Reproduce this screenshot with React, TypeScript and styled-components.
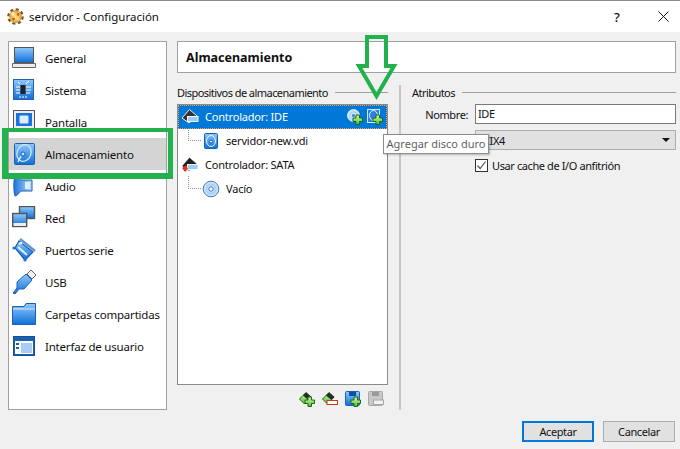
import React from "react";
import styled, { createGlobalStyle } from "styled-components";

const Global = createGlobalStyle`
  html, body { margin: 0; padding: 0; background: #f0f0f0; }
  body { font-family: "Noto Sans", "Open Sans", sans-serif; font-size: 11.5px; color: #101010; }
`;

const Window = styled.div`
  position: relative;
  width: 680px;
  height: 449px;
  overflow: hidden;
  background: #f0f0f0;
`;

const TitleBar = styled.div`
  height: 31px;
  background: #fff;
  border-top: 1px solid #8a8a8a;
  display: flex;
  align-items: center;
  padding: 0 5px 0 7px;
  gap: 5px;
`;

const TitleText = styled.span`
  flex: 1;
`;

const TitleButton = styled.span<{ $close?: boolean }>`
  width: 24px;
  margin-left: ${(p) => (p.$close ? "17px" : "0")};
  display: flex;
  justify-content: center;
  font-size: 13px;
  font-weight: 500;
`;

const Main = styled.div`
  display: flex;
  padding: 9px 4px 0 8px;
  gap: 10px;
`;

const Sidebar = styled.div`
  width: 157px;
  height: 367px;
  background: #fff;
  border: 1px solid #a0a0a0;
`;

const SideItem = styled.div<{ $active?: boolean }>`
  height: 32px;
  display: flex;
  align-items: center;
  padding-left: 3px;
  gap: 9px;
  white-space: nowrap;
  letter-spacing: -0.2px;
  background: ${(p) => (p.$active ? "#d4d4d4" : "transparent")};
  svg { flex: none; }
`;

const Content = styled.div`
  width: 499px;
`;

const Header = styled.div`
  height: 30px;
  background: #fff;
  border: 1px solid #a0a0a0;
  display: flex;
  align-items: center;
  padding-left: 8px;
  font-weight: 700;
  font-size: 12.5px;
`;

const Columns = styled.div`
  display: flex;
  margin-top: 11px;
  font-size: 11px;
  letter-spacing: -0.4px;
`;

const StorageColumn = styled.div`
  width: 212px;
`;

const Splitter = styled.div`
  width: 2px;
  height: 325px;
  background: #c6c6c6;
  margin: 1px 11px 0 11px;
`;

const AttrColumn = styled.div`
  width: 264px;
`;

const GroupTitle = styled.div`
  height: 16px;
  display: flex;
  align-items: center;
  gap: 7px;
  white-space: nowrap;
  letter-spacing: -0.55px;
  &::after {
    content: "";
    flex: 1;
    height: 1px;
    background: #a0a0a0;
  }
`;

const Tree = styled.div`
  margin-top: 4px;
  height: 279px;
  background: #fff;
  border: 1px solid #8a8a8a;
  letter-spacing: -0.2px;
`;

const TreeRow = styled.div<{ $selected?: boolean; $child?: boolean }>`
  position: relative;
  height: 24px;
  display: flex;
  align-items: center;
  box-sizing: border-box;
  padding-left: ${(p) => (p.$child ? "24px" : "3px")};
  gap: 6px;
  background: ${(p) => (p.$selected ? "#0078d7" : "transparent")};
  color: ${(p) => (p.$selected ? "#fff" : "#101010")};
  outline: ${(p) => (p.$selected ? "1px dotted #f0a050" : "none")};
  outline-offset: -1px;
`;

const Branch = styled.span`
  position: absolute;
  left: 10px;
  top: -1px;
  width: 12px;
  height: 12px;
  border-left: 1px dotted #909090;
  border-bottom: 1px dotted #909090;
`;

const RowLabel = styled.span`
  flex: 1;
  padding-bottom: 2px;
`;

const RowActions = styled.span`
  display: flex;
  gap: 4px;
  padding-right: 4px;
`;

const ToolRow = styled.div`
  display: flex;
  justify-content: flex-end;
  gap: 7px;
  padding: 6px 4px 0 0;
`;

const FormRow = styled.div`
  display: flex;
  align-items: center;
  margin-top: 4px;
`;

const FieldLabel = styled.span`
  width: 56px;
  text-align: right;
  margin-right: 7px;
`;

const TextInput = styled.div`
  width: 197px;
  height: 18px;
  line-height: 18px;
  padding-left: 2px;
  background: #fff;
  border: 1px solid #7a7a7a;
`;

const SelectBox = styled.div`
  margin: 6px 0 0 63px;
  width: 195px;
  height: 18px;
  padding: 0 0 0 4px;
  display: flex;
  align-items: center;
  justify-content: space-between;
  background: #e1e1e1;
  border: 1px solid #adadad;
  &::after {
    content: "";
    border-left: 4px solid transparent;
    border-right: 4px solid transparent;
    border-top: 4px solid #111;
    margin-right: 5px;
  }
`;

const CheckRow = styled.div`
  margin: 8px 0 0 63px;
  display: flex;
  align-items: center;
  gap: 4px;
`;

const CheckBox = styled.span`
  width: 11px;
  height: 11px;
  border: 1px solid #333;
  background: #fff;
  display: flex;
  svg { display: block; }
`;

const Footer = styled.div`
  display: flex;
  justify-content: flex-end;
  gap: 9px;
  padding: 11px 5px 0 0;
  font-size: 11px;
  letter-spacing: -0.4px;
`;

const Button = styled.div<{ $primary?: boolean }>`
  box-sizing: border-box;
  width: 72px;
  height: 21px;
  display: flex;
  align-items: center;
  justify-content: center;
  background: #e1e1e1;
  border: ${(p) => (p.$primary ? "2px solid #0078d7" : "1px solid #adadad")};
`;

const Tooltip = styled.div`
  position: absolute;
  left: 383px;
  top: 134px;
  box-sizing: border-box;
  width: 106px;
  height: 20px;
  padding-bottom: 1px;
  background: #fff;
  border: 1px solid #8c8c8c;
  box-shadow: 1px 1px 2px rgba(0, 0, 0, 0.25);
  color: #5f5f5f;
  font-size: 11px;
  display: flex;
  align-items: center;
  justify-content: center;
  white-space: nowrap;
`;

const Highlight = styled.div`
  position: absolute;
  left: 2px;
  top: 128px;
  box-sizing: border-box;
  width: 171px;
  height: 51px;
  border-style: solid;
  border-color: #22b14c;
  border-width: 4px 5px 6px 6px;
`;

const ArrowMark = styled.svg`
  position: absolute;
  left: 355px;
  top: 34px;
`;

const Defs = () => (
  <svg width="0" height="0" style={{ position: "absolute" }}>
    <defs>
      <linearGradient id="blue" x1="0" y1="0" x2="0" y2="1">
        <stop offset="0" stopColor="#8fc8fb" />
        <stop offset="1" stopColor="#0f6fd8" />
      </linearGradient>
      <linearGradient id="hblue" x1="0" y1="0" x2="1" y2="0">
        <stop offset="0" stopColor="#1f74da" />
        <stop offset="1" stopColor="#b9dcfb" />
      </linearGradient>
      <radialGradient id="cd">
        <stop offset="0" stopColor="#fff" />
        <stop offset="0.6" stopColor="#a7d0f3" />
        <stop offset="1" stopColor="#e4f1fc" />
      </radialGradient>
      <radialGradient id="gear">
        <stop offset="0" stopColor="#fbe3a0" />
        <stop offset="1" stopColor="#e39a25" />
      </radialGradient>
      <linearGradient id="green" x1="0" y1="0" x2="0" y2="1">
        <stop offset="0" stopColor="#d4f7b4" />
        <stop offset="1" stopColor="#4cc035" />
      </linearGradient>
    </defs>
  </svg>
);

const Gear = () => (
  <svg width="17" height="17" viewBox="0 0 17 17">
    <circle cx="8.5" cy="8.5" r="7" fill="none" stroke="#6a5434" strokeWidth="2.6" strokeDasharray="3 2.5" />
    <circle cx="8.5" cy="8.5" r="6.4" fill="url(#gear)" />
    <circle cx="6" cy="6" r="1.8" fill="#fff3c8" />
    <circle cx="11" cy="6.5" r="1.3" fill="#b06a18" />
    <circle cx="6.5" cy="11" r="1.3" fill="#b06a18" />
    <circle cx="11" cy="11" r="1.5" fill="#f8d88c" />
  </svg>
);

const CloseGlyph = () => (
  <svg width="11" height="11" viewBox="0 0 11 11">
    <path d="M0.5 0.5 10.5 10.5M10.5 0.5 0.5 10.5" stroke="#111" strokeWidth="1" fill="none" />
  </svg>
);

const IconGeneral = () => (
  <svg width="24" height="24" viewBox="0 0 24 24">
    <rect x="2.5" y="1.5" width="19" height="15" fill="url(#blue)" stroke="#555" />
    <path d="M0.5 17.5H23.5V21.5H0.5Z" fill="#ededed" stroke="#666" />
  </svg>
);

const IconSystem = () => (
  <svg width="24" height="24" viewBox="0 0 24 24">
    <rect x="1.5" y="1.5" width="20" height="20" fill="url(#blue)" stroke="#2a5fa8" />
    <rect x="8.5" y="7" width="5" height="9" fill="#222" />
    <path d="M4 9h4M4 12h4M4 15h4M14 9h5M14 12h5M14 15h4M8 18v2M11 18v2M14 18v2M14 6l3-3M8 6 6 4" stroke="#fff" strokeWidth="1" />
  </svg>
);

const IconDisplay = () => (
  <svg width="24" height="24" viewBox="0 0 24 24">
    <rect x="1.5" y="0.5" width="21" height="18" fill="#eee" stroke="#555" />
    <rect x="4" y="3" width="16" height="13" fill="#1a74dc" />
    <rect x="7.5" y="5.5" width="9" height="8" rx="1" fill="#dcecfb" />
    <rect x="6" y="19" width="12" height="3" fill="#ddd" />
  </svg>
);

const IconStorage = () => (
  <svg width="24" height="24" viewBox="0 0 24 24">
    <rect x="2.5" y="1.5" width="20" height="21" rx="1" fill="url(#blue)" stroke="#1a5fb0" />
    <ellipse cx="12" cy="11" rx="7" ry="8.5" fill="none" stroke="#d8ecfc" strokeWidth="1.2" transform="rotate(20 12 11)" />
    <circle cx="11" cy="12" r="2" fill="#cfe6fb" stroke="#1a5fb0" />
    <path d="M9 14 6 20" stroke="#e6f3fd" strokeWidth="1.4" />
  </svg>
);

const IconAudio = () => (
  <svg width="24" height="24" viewBox="0 0 24 24">
    <path d="M3 2C5 2 9 6 9 6H20V17H9S5 22 3 22C1.5 19 1.5 5 3 2Z" fill="url(#hblue)" stroke="#1a5fb0" />
    <rect x="13" y="8" width="5" height="7" fill="#dcecfb" />
  </svg>
);

const IconNetwork = () => (
  <svg width="24" height="24" viewBox="0 0 24 24">
    <rect x="7.5" y="0.5" width="15" height="12" fill="url(#blue)" stroke="#555" strokeWidth="1.4" />
    <rect x="0.7" y="7.5" width="14" height="13" fill="url(#blue)" stroke="#555" strokeWidth="1.4" />
    <rect x="1.5" y="17" width="12.5" height="3" fill="#eee" />
  </svg>
);

const IconSerial = () => (
  <svg width="24" height="24" viewBox="0 0 24 24">
    <path d="M7 3 21 14 13 22 3 10Z" fill="url(#blue)" stroke="#1a5fb0" strokeWidth="1.2" />
    <path d="M7 6 11 4M6 9 15 17" stroke="#e4f1fc" strokeWidth="2" />
    <path d="M8 1 23 13" stroke="#5f94cf" strokeWidth="2.4" />
    <circle cx="2" cy="10" r="1.6" fill="#1f74da" />
    <circle cx="13" cy="22" r="1.6" fill="#1f74da" />
  </svg>
);

const IconUsb = () => (
  <svg width="24" height="24" viewBox="0 0 24 24">
    <path d="M1 23 5 18 5 12 14 4 20 10 12 19 7 19 3 24Z" fill="url(#blue)" stroke="#1a5fb0" />
    <path d="M15 4 19 0 24 5 20 9Z" fill="#f3f3f3" stroke="#666" />
  </svg>
);

const IconFolder = () => (
  <svg width="24" height="24" viewBox="0 0 24 24">
    <path d="M0.5 22.5V4.5H12L14 1.5H23.5V22.5Z" fill="url(#blue)" stroke="#1a5fb0" />
    <path d="M1 7H23" stroke="#d8ecfc" />
  </svg>
);

const IconInterface = () => (
  <svg width="24" height="24" viewBox="0 0 24 24">
    <rect x="1.5" y="2.5" width="21" height="19" fill="#1a5fb0" stroke="#14509a" />
    <rect x="3" y="7" width="18" height="13" fill="#fff" />
    <rect x="4" y="9" width="3" height="2" fill="#1a5fb0" />
    <rect x="4" y="13" width="3" height="2" fill="#1a5fb0" />
    <rect x="9" y="9" width="11" height="10" fill="#a7cdf5" />
  </svg>
);

const Plus = ({ x = 6, y = 6 }: { x?: number; y?: number }) => (
  <path
    transform={`translate(${x} ${y})`}
    d="M3 0H6.5V3H9.5V6.5H6.5V9.5H3V6.5H0V3H3Z"
    fill="url(#green)"
    stroke="#1c6a12"
    strokeWidth="1"
  />
);

const IconController = ({ dark }: { dark?: boolean }) => (
  <svg width="18" height="18" viewBox="0 0 18 18">
    <path d="M1 10 8.5 1.5 16 8 8 15Z" fill={dark ? "#1e1e1e" : "#333"} stroke="#f2f2f2" strokeWidth={dark ? 0.4 : 1} />
    <rect x="6.5" y="8.5" width="10.5" height="5" fill="#9ccbf6" stroke="#f4f9fe" />
    {dark && <path d="M1 12 5 9 7 13 4 16Z" fill="#d8362a" />}
  </svg>
);

const IconDisk = () => (
  <svg width="18" height="18" viewBox="0 0 18 18">
    <rect x="2.5" y="1.5" width="13" height="15" rx="1" fill="url(#blue)" stroke="#1a5fb0" />
    <ellipse cx="9" cy="9" rx="4.5" ry="5.5" fill="none" stroke="#eaf5fe" />
    <circle cx="9" cy="9.5" r="1.5" fill="#eaf5fe" stroke="#1a5fb0" />
  </svg>
);

const IconCd = () => (
  <svg width="18" height="18" viewBox="0 0 18 18">
    <circle cx="9" cy="9" r="7.8" fill="url(#cd)" stroke="#3d79b8" />
    <circle cx="9" cy="9" r="2.2" fill="#fff" stroke="#3d79b8" />
  </svg>
);

const IconAddCd = () => (
  <svg width="16" height="16" viewBox="0 0 16 16">
    <circle cx="6.5" cy="6.5" r="6" fill="url(#cd)" stroke="#d6e9fa" />
    <circle cx="6.5" cy="6.5" r="1.5" fill="#2a7fe0" />
    <Plus />
  </svg>
);

const IconAddDisk = () => (
  <svg width="16" height="16" viewBox="0 0 16 16">
    <rect x="0.5" y="0.5" width="12" height="13" fill="#2a7fe0" stroke="#d6e9fa" />
    <ellipse cx="6.5" cy="6.5" rx="4" ry="5" fill="none" stroke="#eaf5fe" />
    <Plus />
  </svg>
);

const IconAddController = () => (
  <svg width="16" height="16" viewBox="0 0 16 16">
    <path d="M0.5 8 7 1.5 12 6 5.5 13Z" fill="url(#green)" stroke="#1f6a12" />
    <path d="M7 1.5 12.5 6 9.5 9 4 4.5Z" fill="#2a2a2a" />
    <Plus />
  </svg>
);

const IconRemoveController = () => (
  <svg width="16" height="16" viewBox="0 0 16 16">
    <path d="M0.5 8 7 1.5 12 6 5.5 13Z" fill="url(#green)" stroke="#1f6a12" />
    <path d="M7 1.5 12.5 6 9.5 9 4 4.5Z" fill="#2a2a2a" />
    <rect x="5" y="9.5" width="10.5" height="4" fill="#fff" stroke="#c8381c" />
  </svg>
);

const IconAddAttachment = () => (
  <svg width="16" height="16" viewBox="0 0 16 16">
    <rect x="0.5" y="0.5" width="14" height="14" rx="1" fill="url(#blue)" stroke="#1a5fb0" />
    <rect x="4" y="1" width="7" height="4" fill="#0f4fa8" />
    <Plus />
  </svg>
);

const IconRemoveAttachment = () => (
  <svg width="16" height="16" viewBox="0 0 16 16">
    <rect x="0.5" y="0.5" width="14" height="14" rx="1" fill="#c8c8c8" stroke="#a8a8a8" />
    <rect x="4" y="1" width="7" height="4" fill="#9a9a9a" />
    <rect x="5.5" y="9" width="10" height="4.5" fill="#f0f0f0" stroke="#a8a8a8" />
  </svg>
);

const sections: { label: string; icon: React.ReactNode; active?: boolean }[] = [
  { label: "General", icon: <IconGeneral /> },
  { label: "Sistema", icon: <IconSystem /> },
  { label: "Pantalla", icon: <IconDisplay /> },
  { label: "Almacenamiento", icon: <IconStorage />, active: true },
  { label: "Audio", icon: <IconAudio /> },
  { label: "Red", icon: <IconNetwork /> },
  { label: "Puertos serie", icon: <IconSerial /> },
  { label: "USB", icon: <IconUsb /> },
  { label: "Carpetas compartidas", icon: <IconFolder /> },
  { label: "Interfaz de usuario", icon: <IconInterface /> },
];

export default function App() {
  return (
    <Window>
      <Global />
      <Defs />
      <TitleBar>
        <Gear />
        <TitleText>servidor - Configuración</TitleText>
        <TitleButton>?</TitleButton>
        <TitleButton $close>
          <CloseGlyph />
        </TitleButton>
      </TitleBar>
      <Main>
        <Sidebar>
          {sections.map((s) => (
            <SideItem key={s.label} $active={s.active}>
              {s.icon}
              <span>{s.label}</span>
            </SideItem>
          ))}
        </Sidebar>
        <Content>
          <Header>Almacenamiento</Header>
          <Columns>
            <StorageColumn>
              <GroupTitle>Dispositivos de almacenamiento</GroupTitle>
              <Tree>
                <TreeRow $selected>
                  <IconController />
                  <RowLabel>Controlador: IDE</RowLabel>
                  <RowActions>
                    <IconAddCd />
                    <IconAddDisk />
                  </RowActions>
                </TreeRow>
                <TreeRow $child>
                  <Branch />
                  <IconDisk />
                  <RowLabel>servidor-new.vdi</RowLabel>
                </TreeRow>
                <TreeRow>
                  <IconController dark />
                  <RowLabel>Controlador: SATA</RowLabel>
                </TreeRow>
                <TreeRow $child>
                  <Branch />
                  <IconCd />
                  <RowLabel>Vacío</RowLabel>
                </TreeRow>
              </Tree>
              <ToolRow>
                <IconAddController />
                <IconRemoveController />
                <IconAddAttachment />
                <IconRemoveAttachment />
              </ToolRow>
            </StorageColumn>
            <Splitter />
            <AttrColumn>
              <GroupTitle>Atributos</GroupTitle>
              <FormRow>
                <FieldLabel>Nombre:</FieldLabel>
                <TextInput>IDE</TextInput>
              </FormRow>
              <SelectBox>PIIX4</SelectBox>
              <CheckRow>
                <CheckBox>
                  <svg width="11" height="11" viewBox="0 0 11 11">
                    <path d="M1.5 5.5 4.2 8.5 9.5 1.5" stroke="#555" strokeWidth="1.2" fill="none" />
                  </svg>
                </CheckBox>
                <span>Usar cache de I/O anfitrión</span>
              </CheckRow>
            </AttrColumn>
          </Columns>
        </Content>
      </Main>
      <Footer>
        <Button $primary>Aceptar</Button>
        <Button>Cancelar</Button>
      </Footer>
      <Tooltip>Agregar disco duro</Tooltip>
      <Highlight />
      <ArrowMark width="44" height="68" viewBox="0 0 44 68">
        <path d="M12 3H31V32H39L21.5 62 4 32H12Z" fill="none" stroke="#22b14c" strokeWidth="4" />
      </ArrowMark>
    </Window>
  );
}
